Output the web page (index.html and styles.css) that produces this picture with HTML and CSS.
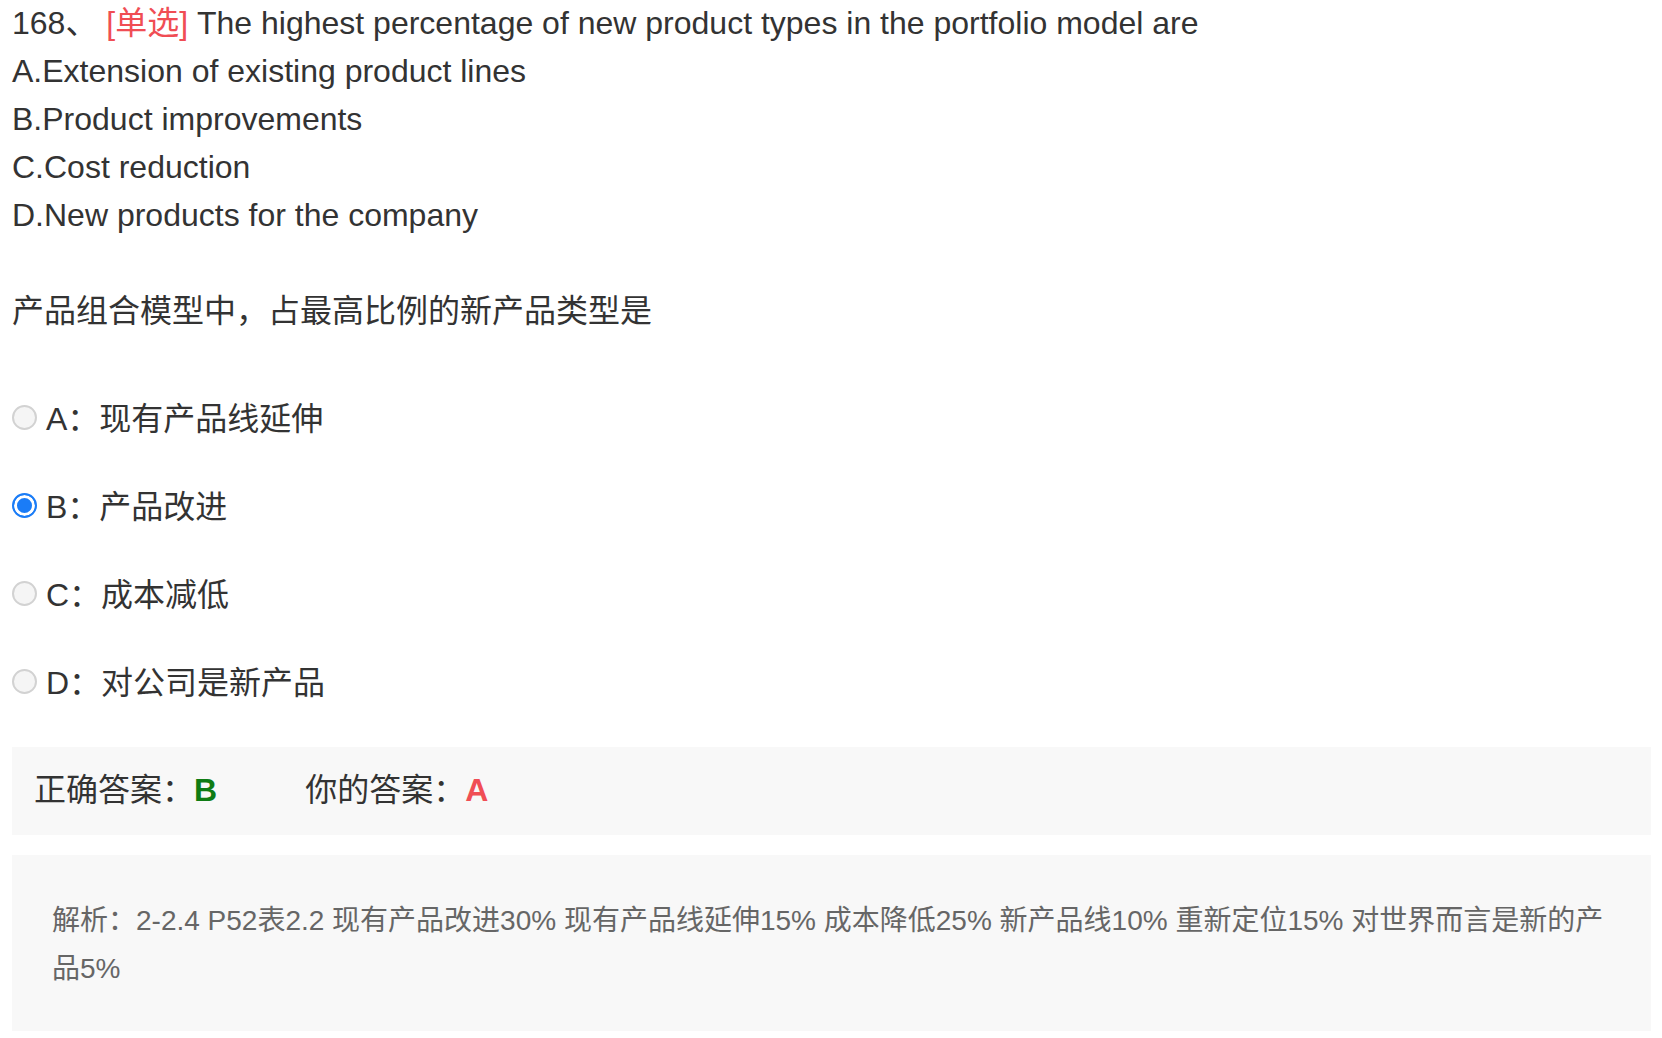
FILE: index.html
```html
<!DOCTYPE html>
<html lang="zh-CN">
<head>
<meta charset="utf-8">
<title>168 单选</title>
<link rel="stylesheet" href="styles.css">
</head>
<body>
<div class="page">
  <div class="question">
    <div class="line">168、 <span class="tag">[单选]</span> The highest percentage of new product types in the portfolio model are</div>
    <div class="line">A.Extension of existing product lines</div>
    <div class="line">B.Product improvements</div>
    <div class="line">C.Cost reduction</div>
    <div class="line">D.New products for the company</div>
    <div class="line blank"></div>
    <div class="line">产品组合模型中，占最高比例的新产品类型是</div>
  </div>

  <div class="options">
    <label class="option"><input class="radio" type="radio" name="q168"><span class="opt-text">A：现有产品线延伸</span></label>
    <label class="option"><input class="radio" type="radio" name="q168" checked><span class="opt-text">B：产品改进</span></label>
    <label class="option"><input class="radio" type="radio" name="q168"><span class="opt-text">C：成本减低</span></label>
    <label class="option"><input class="radio" type="radio" name="q168"><span class="opt-text">D：对公司是新产品</span></label>
  </div>

  <div class="answer-box">
    <span class="answer">正确答案：<b class="correct">B</b></span>
    <span class="answer mine">你的答案：<b class="wrong">A</b></span>
  </div>

  <div class="analysis">解析：2-2.4 P52表2.2 现有产品改进30% 现有产品线延伸15% 成本降低25% 新产品线10% 重新定位15% 对世界而言是新的产品5%</div>
</div>
</body>
</html>
```

FILE: styles.css
```css
html, body {
  margin: 0;
  padding: 0;
  background: #ffffff;
}

body {
  font-family: "Liberation Sans", "Noto Sans CJK SC", sans-serif;
  color: #333333;
}

.page {
  padding: 0 11px 0 12px;
}

.question {
  margin-top: -1px;
  font-size: 32px;
  line-height: 48px;
}

.line {
  height: 48px;
  white-space: nowrap;
}

.tag {
  color: #f04d54;
}

.options {
  margin-top: 58px;
  display: flex;
  flex-direction: column;
  gap: 38px;
}

.option {
  display: flex;
  align-items: flex-start;
  font-size: 32px;
  line-height: 48px;
}

.opt-text {
  padding-top: 2px;
}

.radio {
  -webkit-appearance: none;
  appearance: none;
  box-sizing: border-box;
  width: 25px;
  height: 25px;
  margin: 11.5px 9px 0 0;
  border-radius: 50%;
  border: 2px solid #d2d2d2;
  background: #f5f5f5;
  flex: none;
}

.radio:checked {
  border: 2.5px solid #1a7cf7;
  background: #1a7cf7;
  box-shadow: inset 0 0 0 3px #ffffff;
}

.answer-box {
  margin-top: 40px;
  background: #f8f8f8;
  padding: 19px 22px 21px;
  font-size: 32px;
  line-height: 48px;
  display: flex;
}

.mine {
  margin-left: 88px;
}

.correct {
  color: #0f7c14;
  font-weight: bold;
}

.wrong {
  color: #f04e55;
  font-weight: bold;
}

.analysis {
  margin-top: 20px;
  background: #f8f8f8;
  padding: 42px 40px 38px;
  font-size: 28px;
  line-height: 48px;
  color: #666666;
}
```
